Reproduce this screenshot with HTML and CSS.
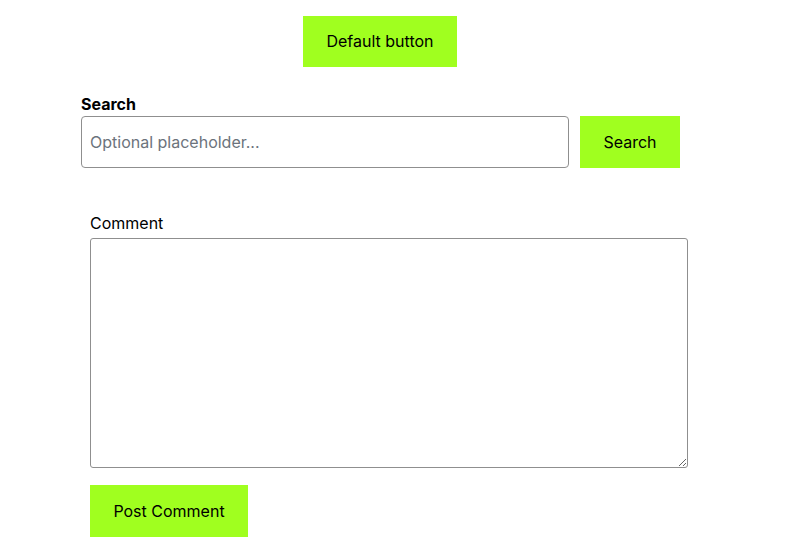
FILE: index.html
```html
<!DOCTYPE html>
<html>
<head>
<meta charset="utf-8">
<link rel="stylesheet" href="styles.css">
</head>
<body>
<div class="top">
  <button class="btn">Default button</button>
</div>
<form class="search">
  <label class="search-label" for="q">Search</label>
  <div class="search-row">
    <input id="q" class="search-input" type="text" placeholder="Optional placeholder...">
    <button class="btn" type="button">Search</button>
  </div>
</form>
<form class="comment">
  <label class="comment-label" for="c">Comment</label>
  <textarea id="c" class="comment-area"></textarea>
  <button class="btn" type="button">Post Comment</button>
</form>
</body>
</html>
```
FILE: styles.css
```css
html, body {
  margin: 0;
  padding: 0;
  background: #fff;
  font-family: Inter, "Liberation Sans", sans-serif;
  font-size: 16px;
  color: #000;
}
.btn {
  background: #a0ff1f;
  border: none;
  padding: 16px 24px;
  font-family: Inter, "Liberation Sans", sans-serif;
  font-size: 16px;
  line-height: 19px;
  color: #000;
  margin: 0;
}
.top {
  padding: 16px 0 0 303px;
}
.top .btn {
  width: 154px;
  height: 51px;
  padding: 0;
}
.search {
  margin: 27px 0 0 81px;
  display: flex;
  flex-direction: column;
}
.search-label {
  font-weight: 700;
  line-height: 20px;
  margin-bottom: 2px;
}
.search-row {
  display: flex;
  gap: 11px;
}
.search-input {
  box-sizing: border-box;
  width: 488px;
  height: 52px;
  border: 1px solid #8f8f8f;
  border-radius: 4px;
  padding: 0 8px;
  font-family: Inter, "Liberation Sans", sans-serif;
  font-size: 16px;
  margin: 0;
}
.search-input::placeholder {
  color: #6c737c;
}
.search-row .btn {
  width: 100px;
  height: 52px;
  padding: 0;
}
.comment {
  margin: 45px 0 0 90px;
  display: flex;
  flex-direction: column;
  align-items: flex-start;
}
.comment-label {
  line-height: 20px;
  margin-bottom: 5px;
}
.comment-area {
  box-sizing: border-box;
  width: 598px;
  height: 230px;
  border: 1px solid #8f8f8f;
  border-radius: 3px;
  margin: 0 0 17px 0;
  resize: both;
}
.comment .btn {
  width: 158px;
  height: 52px;
  padding: 0;
}
```
